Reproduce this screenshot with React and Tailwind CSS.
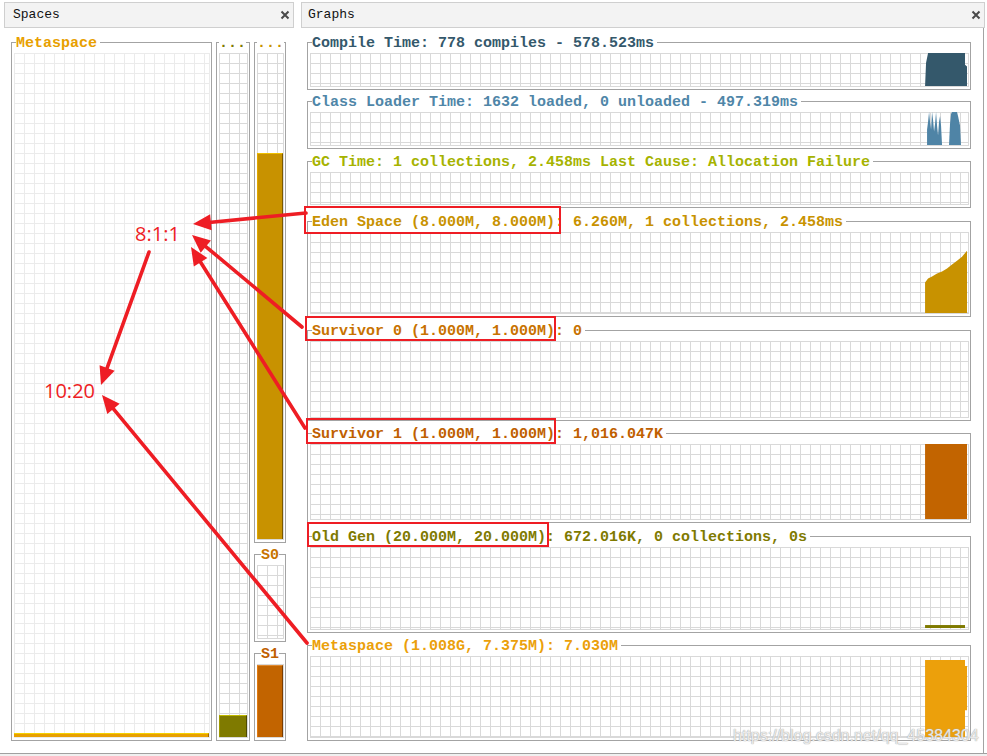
import React from "react";

const MONO = "font-['Liberation_Mono',monospace]";

function CloseX() {
  return (
    <svg width="10" height="10" viewBox="0 0 10 10" className="shrink-0">
      <path d="M1.5 1.5 L8.5 8.5 M8.5 1.5 L1.5 8.5" stroke="#4a4a4a" strokeWidth="2" />
    </svg>
  );
}

function Header({ title, className }) {
  return (
    <div
      className={`mt-[2px] h-[26px] flex items-center justify-between border border-[#cfcfcf] bg-[#f3f3f3] pr-[3px] ${MONO} text-[13px] text-[#111] ${className}`}
    >
      <span>{title}</span>
      <CloseX />
    </div>
  );
}

function Grid({ light, gridClass, children }) {
  return (
    <div
      className={
        light
          ? `relative w-full ${gridClass} border-r border-b border-[#ebebeb] bg-[linear-gradient(to_right,#ebebeb_1px,transparent_1px),linear-gradient(to_bottom,#ebebeb_1px,transparent_1px)] bg-[length:10px_10px]`
          : `relative w-full ${gridClass} border-r border-b border-[#d9d9d9] bg-[linear-gradient(to_right,#d9d9d9_1px,transparent_1px),linear-gradient(to_bottom,#d9d9d9_1px,transparent_1px)] bg-[length:10px_10px]`
      }
    >
      {children}
    </div>
  );
}

function Box({ title, color, className, legendClass, gridClass, light, children }) {
  return (
    <fieldset className={`block border border-[#a3a3a3] pl-[2px] pr-[1px] pb-[2px] pt-[1px] ${className}`}>
      <legend
        className={`${MONO} text-[15px] leading-[16px] pt-[4px] font-bold whitespace-nowrap ${legendClass}`}
        style={{ color }}
      >
        {title}
      </legend>
      <Grid light={light} gridClass={gridClass}>
        {children}
      </Grid>
    </fieldset>
  );
}

function Chart({ kind }) {
  if (kind === "compile") {
    return (
      <svg className="absolute inset-0" width="100%" height="100%" viewBox="0 0 659 34" preserveAspectRatio="none">
        <polygon points="616,34 617,10 619,0 656,0 656,12 658,14 658,34" fill="#34586b" />
      </svg>
    );
  }
  if (kind === "loader") {
    return (
      <svg className="absolute inset-0" width="100%" height="100%" viewBox="0 0 659 34" preserveAspectRatio="none">
        <polygon points="618,34 618,18 619,10 620,0 621,10 622,18 623,0 624,8 625,20 626,12 627,0 628,14 629,24 630,10 631,4 632,14 633,34" fill="#4f84a6" />
        <polygon points="640,34 641,12 642,2 643,0 648,0 649,4 651,14 652,34" fill="#4f84a6" />
      </svg>
    );
  }
  if (kind === "eden") {
    return (
      <svg className="absolute inset-0" width="100%" height="100%" viewBox="0 0 659 82" preserveAspectRatio="none">
        <polygon points="616,82 616,51 619,47 623,45 628,42 633,40 638,37 643,33 648,29 653,25 658,19 658,82" fill="#c89200" />
      </svg>
    );
  }
  if (kind === "s1") {
    return (
      <svg className="absolute inset-0" width="100%" height="100%" viewBox="0 0 659 76" preserveAspectRatio="none">
        <rect x="616" y="0" width="42" height="76" fill="#c26400" />
      </svg>
    );
  }
  if (kind === "old") {
    return (
      <svg className="absolute inset-0" width="100%" height="100%" viewBox="0 0 659 83" preserveAspectRatio="none">
        <rect x="616" y="79" width="40" height="3" fill="#7f7a00" />
      </svg>
    );
  }
  if (kind === "meta") {
    return (
      <svg className="absolute inset-0" width="100%" height="100%" viewBox="0 0 659 82" preserveAspectRatio="none">
        <polygon points="616,82 616,4 656,4 656,10 658,10 658,55 656,55 656,82" fill="#eca00b" />
      </svg>
    );
  }
  return null;
}

const graphs = [
  { title: "Compile Time: 778 compiles - 578.523ms", color: "#34586b", cls: "", grid: "h-[34px]", kind: "compile" },
  { title: "Class Loader Time: 1632 loaded, 0 unloaded - 497.319ms", color: "#4f86a8", cls: "mt-[1px]", grid: "h-[34px]", kind: "loader" },
  { title: "GC Time: 1 collections, 2.458ms Last Cause: Allocation Failure", color: "#a6b300", cls: "mt-[2px]", grid: "h-[33px]", kind: null },
  { title: "Eden Space (8.000M, 8.000M): 6.260M, 1 collections, 2.458ms", color: "#c89200", cls: "mt-[3px]", grid: "h-[82px]", kind: "eden" },
  { title: "Survivor 0 (1.000M, 1.000M): 0", color: "#c87200", cls: "mt-[3px]", grid: "h-[77px]", kind: null },
  { title: "Survivor 1 (1.000M, 1.000M): 1,016.047K", color: "#c06000", cls: "mt-[2px]", grid: "h-[76px]", kind: "s1" },
  { title: "Old Gen (20.000M, 20.000M): 672.016K, 0 collections, 0s", color: "#7f7a00", cls: "mt-[3px]", grid: "h-[83px]", kind: "old" },
  { title: "Metaspace (1.008G, 7.375M): 7.030M", color: "#eba00a", cls: "mt-[2px]", grid: "h-[82px]", kind: "meta" },
];

function Arrow({ x1, y1, x2, y2 }) {
  const dx = x2 - x1;
  const dy = y2 - y1;
  const len = Math.hypot(dx, dy);
  const ux = dx / len;
  const uy = dy / len;
  const nx = -uy;
  const ny = ux;
  const hl = 18;
  const hw = 8;
  const bx = x2 - ux * hl;
  const by = y2 - uy * hl;
  return (
    <g>
      <line x1={x1} y1={y1} x2={bx + ux * 2} y2={by + uy * 2} stroke="#ee1d24" strokeWidth="3.6" strokeLinecap="round" />
      <polygon
        points={`${x2},${y2} ${bx + nx * hw},${by + ny * hw} ${bx - nx * hw},${by - ny * hw}`}
        fill="#ee1d24"
      />
    </g>
  );
}

function Overlay() {
  return (
    <>
      <svg className="absolute left-0 top-0 pointer-events-none" width="987" height="756" viewBox="0 0 987 756">
        <rect x="305" y="207" width="255" height="26" fill="none" stroke="#ee1d24" strokeWidth="2" />
        <rect x="306" y="317" width="249" height="23" fill="none" stroke="#ee1d24" strokeWidth="2" />
        <rect x="307" y="419" width="248" height="24" fill="none" stroke="#ee1d24" strokeWidth="2" />
        <rect x="308" y="523" width="240" height="23" fill="none" stroke="#ee1d24" strokeWidth="2" />
        <Arrow x1={306} y1={213} x2={193} y2={224} />
        <Arrow x1={302} y1={327} x2={192} y2={235} />
        <Arrow x1={305} y1={428} x2={191} y2={247} />
        <Arrow x1={149} y1={252} x2={101} y2={385} />
        <Arrow x1={307} y1={643} x2={102} y2={395} />
      </svg>
      <span className="absolute left-[135px] top-[222px] font-['Open_Sans','Liberation_Sans',sans-serif] text-[20px] leading-[24px] text-[#ee1d24]">
        8:1:1
      </span>
      <span className="absolute left-[44px] top-[379px] font-['Open_Sans','Liberation_Sans',sans-serif] text-[20px] leading-[24px] text-[#ee1d24]">
        10:20
      </span>
      <span className="absolute left-[733px] top-[726px] font-['Liberation_Sans',sans-serif] text-[16px] leading-[20px] text-[rgba(255,255,255,0.75)] [text-shadow:0_0_1px_#aaaaaa,0_0_1px_#aaaaaa]">
        https://blog.csdn.net/qq_45384304
      </span>
    </>
  );
}

export default function App() {
  return (
    <div className="relative w-[987px] h-[756px] bg-white overflow-hidden">
      <div className="flex h-[753px]">
        {/* Spaces panel */}
        <div className="ml-[4px] w-[290px] flex flex-col">
          <Header title="Spaces" className="pl-[8px]" />
          <div className="flex items-start pl-[7px] pt-[4px] gap-[4px]">
            <Box
              title="Metaspace"
              color="#e8a000"
              className="w-[201px]"
              gridClass="h-[685px]"
              legendClass="ml-[2px] pr-[3px]"
              light
            >
              <div className="absolute left-0 right-0 bottom-0 h-[4px] bg-[#e8a000] border-t border-t-[#f5d000] border-r border-r-[#a06a00]" />
            </Box>
            <Box title="..." color="#7f7a00" className="w-[34px]" gridClass="h-[685px]" legendClass="ml-0">
              <div className="absolute left-0 right-0 bottom-0 h-[22px] bg-[#7f7a00] border-t border-t-[#c0b800] border-r border-r-[#4e4a00] border-l border-l-[#a09a00]" />
            </Box>
            <div className="flex flex-col w-[32px]">
              <Box title="..." color="#c89200" className="w-[32px]" gridClass="h-[487px]" legendClass="ml-0">
                <div className="absolute left-0 right-0 bottom-0 top-[100px] bg-[#c89200] border-t border-t-[#f0c000] border-r border-r-[#7a5800] border-l border-l-[#e0a800]" />
              </Box>
              <Box title="S0" color="#c87400" className="w-[32px] mt-[1px]" gridClass="h-[74px]" legendClass="ml-[4px]" />
              <Box title="S1" color="#c06000" className="w-[32px] mt-[1px]" gridClass="h-[74px]" legendClass="ml-[4px]">
                <div className="absolute left-0 right-0 bottom-0 top-[1px] bg-[#c26400] border-t border-t-[#e08a30] border-r border-r-[#7a3c00] border-l border-l-[#e07a10]" />
              </Box>
            </div>
          </div>
        </div>
        {/* Graphs panel */}
        <div className="ml-[7px] w-[684px] flex flex-col">
          <Header title="Graphs" className="pl-[6px]" />
          <div className="flex-1 w-[683px] border-r border-[#a3a3a3] pl-[6px] pt-[4px] flex flex-col">
            {graphs.map((g) => (
              <Box
                key={g.title}
                title={g.title}
                color={g.color}
                className={`w-[664px] ${g.cls}`}
                gridClass={g.grid}
                legendClass="ml-[2px] pr-[3px]"
              >
                <Chart kind={g.kind} />
              </Box>
            ))}
          </div>
        </div>
      </div>
      <div className="h-[3px] border-t border-[#a0a0a0] bg-[#f0f0f0]" />
      <Overlay />
    </div>
  );
}
